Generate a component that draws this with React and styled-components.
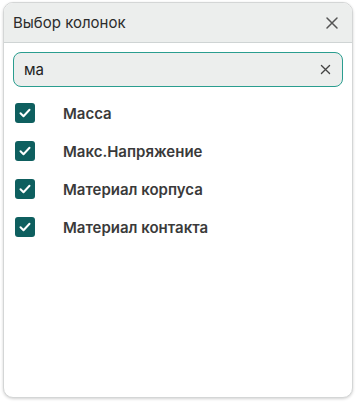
import React, { useState } from 'react';
import styled, { createGlobalStyle } from 'styled-components';

const GlobalStyle = createGlobalStyle`
  html, body {
    margin: 0;
    padding: 0;
    background: #fff;
  }
  body {
    font-family: Inter, "Noto Sans", sans-serif;
  }
`;

const Page = styled.div`
  padding: 2px 4px 4px 3px;
`;

const Panel = styled.div`
  width: 350px;
  height: 396px;
  box-sizing: border-box;
  border-radius: 10px;
  background: #fff;
  border: 1px solid #d4d6d6;
  box-shadow: 0 1px 3px rgba(0, 0, 0, 0.18);
  display: flex;
  flex-direction: column;
  overflow: hidden;
`;

const Header = styled.div`
  height: 39px;
  flex: 0 0 auto;
  display: flex;
  align-items: center;
  justify-content: space-between;
  padding: 0 12px 0 9px;
  background: #eceeed;
  border-bottom: 1px solid #cfd4d4;
`;

const Title = styled.span`
  font-size: 15px;
  color: #2b2b2b;
`;

const IconButton = styled.button`
  border: none;
  background: transparent;
  padding: 0;
  display: flex;
  align-items: center;
  justify-content: center;
  cursor: pointer;
  color: ${p => p.$color || '#444'};
`;

const Body = styled.div`
  padding: 9px 9px 0 9px;
  display: flex;
  flex-direction: column;
`;

const SearchBox = styled.div`
  height: 35px;
  box-sizing: border-box;
  border: 1px solid #2a9d8f;
  border-radius: 8px;
  background: #eceeed;
  display: flex;
  align-items: center;
  padding: 0 10px 0 10px;
`;

const SearchInput = styled.input`
  flex: 1;
  border: none;
  outline: none;
  background: transparent;
  font-family: inherit;
  font-size: 15px;
  color: #222;
  padding: 0;
`;

const List = styled.div`
  display: flex;
  flex-direction: column;
  padding-top: 16px;
`;

const Row = styled.label`
  display: flex;
  align-items: center;
  height: 38px;
  margin-top: ${p => (p.$first ? '-9px' : '0')};
  cursor: pointer;
`;

const Box = styled.span`
  width: 20px;
  height: 20px;
  margin-left: 2px;
  border-radius: 3px;
  background: ${p => (p.$checked ? '#0e5f5f' : '#fff')};
  display: flex;
  align-items: center;
  justify-content: center;
  flex: 0 0 auto;
`;

const Label = styled.span`
  margin-left: 28px;
  font-size: 15px;
  font-weight: 600;
  color: #3a3a3a;
`;

const Close = ({ size = 16, stroke = 1.6 }) => (
  <svg width={size} height={size} viewBox="0 0 16 16" fill="none" stroke="currentColor" strokeWidth={stroke} strokeLinecap="round">
    <path d="M3 3l10 10M13 3L3 13" />
  </svg>
);

const Check = () => (
  <svg width="14" height="14" viewBox="0 0 14 14" fill="none" stroke="#fff" strokeWidth="2" strokeLinecap="round" strokeLinejoin="round">
    <path d="M2.5 7.2l3 3 6-6.4" />
  </svg>
);

const columns = ['Масса', 'Макс.Напряжение', 'Материал корпуса', 'Материал контакта'];

export default function App() {
  const [query, setQuery] = useState('ма');
  const [checked, setChecked] = useState(columns.map(() => true));

  return (
    <Page>
      <GlobalStyle />
      <Panel>
        <Header>
          <Title>Выбор колонок</Title>
          <IconButton $color="#555">
            <Close size={16} stroke={1.5} />
          </IconButton>
        </Header>
        <Body>
          <SearchBox>
            <SearchInput value={query} onChange={e => setQuery(e.target.value)} />
            <IconButton $color="#444" onClick={() => setQuery('')}>
              <Close size={13} stroke={1.6} />
            </IconButton>
          </SearchBox>
          <List>
            {columns.map((c, i) => (
              <Row key={c} $first={i === 0} onClick={() => setChecked(checked.map((v, j) => (j === i ? !v : v)))}>
                <Box $checked={checked[i]}>{checked[i] && <Check />}</Box>
                <Label>{c}</Label>
              </Row>
            ))}
          </List>
        </Body>
      </Panel>
    </Page>
  );
}
